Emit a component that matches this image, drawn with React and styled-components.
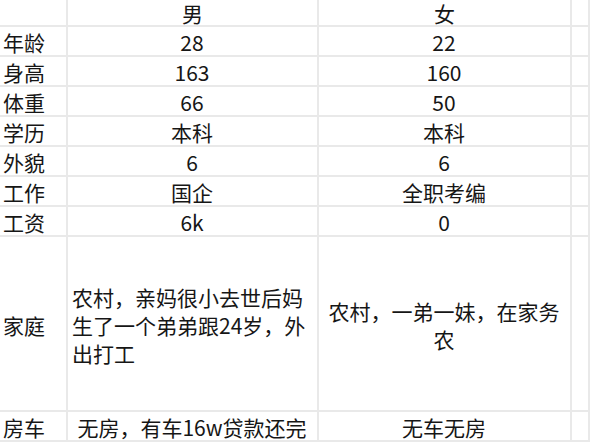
import styled, { createGlobalStyle } from "styled-components";

const GlobalStyle = createGlobalStyle`
  html, body {
    margin: 0;
    padding: 0;
    background: #fff;
    overflow: hidden;
  }
  body {
    font-family: "Noto Sans CJK SC", "Noto Sans", sans-serif;
    color: #161616;
  }
`;

const Sheet = styled.div`
  display: grid;
  grid-template-columns: 68px 251px 253px 1fr;
  grid-template-rows: 27px repeat(7, 30px) 175px 30px;
  width: 590px;
  height: 442px;
  overflow: hidden;
  font-size: 21px;
  line-height: 28px;
`;

const Cell = styled.div`
  box-sizing: border-box;
  display: flex;
  align-items: center;
  justify-content: ${(p) => (p.$left ? "flex-start" : "center")};
  text-align: ${(p) => (p.$left ? "left" : "center")};
  padding: ${(p) => (p.$head ? "0 5px" : p.$label ? "2px 0 0 3px" : "2px 5px 0 4px")};
  line-height: ${(p) => (p.$head ? "22px" : "28px")};
  border-right: 2px solid #e9e9e9;
  border-bottom: 2px solid #e9e9e9;
  white-space: ${(p) => (p.$wrap ? "normal" : "nowrap")};
`;

const rows = [
  ["年龄", "28", "22"],
  ["身高", "163", "160"],
  ["体重", "66", "50"],
  ["学历", "本科", "本科"],
  ["外貌", "6", "6"],
  ["工作", "国企", "全职考编"],
  ["工资", "6k", "0"],
];

export default function App() {
  return (
    <>
      <GlobalStyle />
      <Sheet>
        <Cell $head />
        <Cell $head>男</Cell>
        <Cell $head>女</Cell>
        <Cell $head />

        {rows.map(([label, male, female]) => [
          <Cell key={label + "l"} $label $left>
            {label}
          </Cell>,
          <Cell key={label + "m"}>{male}</Cell>,
          <Cell key={label + "f"}>{female}</Cell>,
          <Cell key={label + "e"} />,
        ])}

        <Cell $label $left>家庭</Cell>
        <Cell $left $wrap>
          农村，亲妈很小去世后妈生了一个弟弟跟24岁，外出打工
        </Cell>
        <Cell $wrap>农村，一弟一妹，在家务农</Cell>
        <Cell />

        <Cell $label $left>房车</Cell>
        <Cell>无房，有车16w贷款还完</Cell>
        <Cell>无车无房</Cell>
        <Cell />
      </Sheet>
    </>
  );
}
